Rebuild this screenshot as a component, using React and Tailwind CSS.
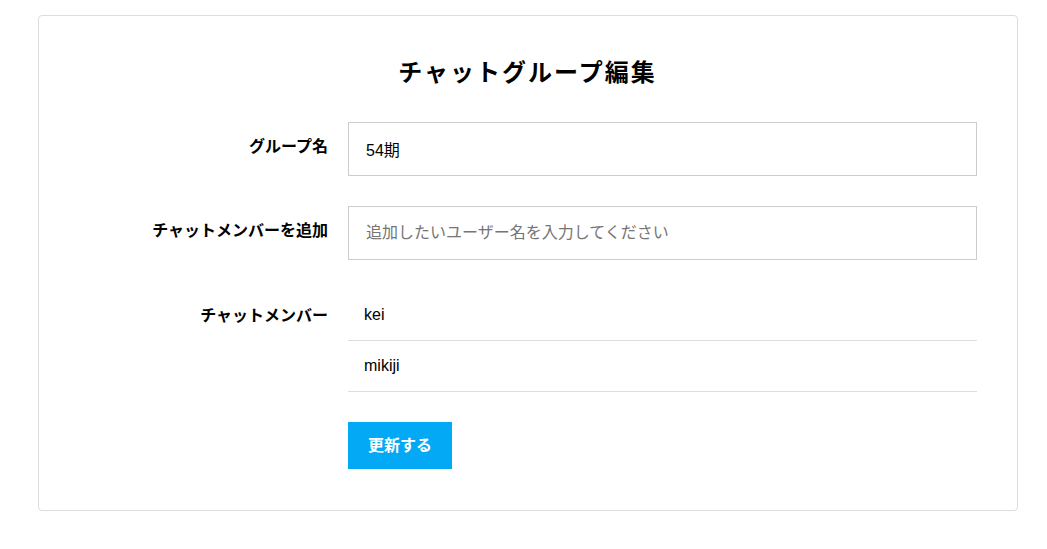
const FONT = "font-['Liberation_Sans','Noto_Sans_CJK_JP',sans-serif]";

function Label({ children, h }) {
  return (
    <div className={`w-[250px] shrink-0 flex items-center justify-end text-[16px] font-bold text-black ${h}`}>
      {children}
    </div>
  );
}

export default function App() {
  const members = ["kei", "mikiji"];
  return (
    <div className={`min-h-[549px] bg-white pt-[15px] px-[38px] ${FONT}`}>
      <div className="w-[980px] rounded-[4px] border border-[#dddddd] bg-white pt-[41px] pb-[41px] pr-[40px] pl-[39px]">
        <h1 className="text-center text-[24px] leading-[32px] font-bold tracking-[0.085em] text-black">
          チャットグループ編集
        </h1>

        <div className="mt-[33px] flex flex-col">
          <div className="flex gap-[20px]">
            <Label h="h-[50px]">グループ名</Label>
            <input
              defaultValue="54期"
              className="flex-1 h-[54px] border border-[#cccccc] px-[17px] text-[16px] text-black outline-none"
            />
          </div>

          <div className="mt-[30px] flex gap-[20px]">
            <Label h="h-[50px]">チャットメンバーを追加</Label>
            <input
              placeholder="追加したいユーザー名を入力してください"
              className="flex-1 h-[54px] border border-[#cccccc] px-[17px] text-[16px] text-black outline-none placeholder:text-[#757575]"
            />
          </div>

          <div className="mt-[30px] flex gap-[20px]">
            <Label h="h-[51px]">チャットメンバー</Label>
            <div className="flex-1 flex flex-col">
              {members.map((m) => (
                <div key={m} className="h-[51px] flex items-center border-b border-[#dddddd] px-[16px] text-[16px] text-black">
                  {m}
                </div>
              ))}
            </div>
          </div>

          <div className="mt-[30px] flex gap-[20px]">
            <div className="w-[250px] shrink-0" />
            <button className="w-[104px] h-[47px] bg-[#03a9f4] text-white text-[16px] font-bold">
              更新する
            </button>
          </div>
        </div>
      </div>
    </div>
  );
}
